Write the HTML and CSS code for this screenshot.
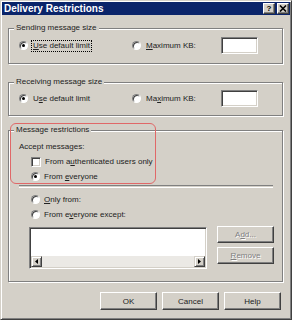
FILE: index.html
```html
<!DOCTYPE html>
<html lang="en">
<head>
  <meta charset="UTF-8">
  <title>Delivery Restrictions</title>
  <link rel="stylesheet" href="styles.css">
</head>
<body>
  <div class="window">
    <div class="titlebar">
      <span class="title">Delivery Restrictions</span>
      <div class="title-buttons">
        <span class="tbtn">?</span>
        <span class="tbtn">
          <svg width="8" height="7" viewBox="0 0 8 7"><path d="M1 0.5 L7 6.5 M7 0.5 L1 6.5" stroke="#000" stroke-width="1.6" fill="none"/></svg>
        </span>
      </div>
    </div>

    <div class="content">
      <fieldset class="group g1">
        <legend>Sending message size</legend>
        <div class="group-body">
          <div class="size-row">
            <label class="opt opt-default"><span class="radio checked"></span><span class="focus"><u>U</u>se default limit</span></label>
            <label class="opt"><span class="radio"></span><span class="opt-text"><u>M</u>aximum KB:</span></label>
            <span class="textbox"></span>
          </div>
        </div>
      </fieldset>

      <fieldset class="group g2">
        <legend>Receiving message size</legend>
        <div class="group-body">
          <div class="size-row">
            <label class="opt opt-default"><span class="radio checked"></span><span class="opt-text">U<u>s</u>e default limit</span></label>
            <label class="opt"><span class="radio"></span><span class="opt-text">Ma<u>x</u>imum KB:</span></label>
            <span class="textbox"></span>
          </div>
        </div>
      </fieldset>

      <fieldset class="group g3">
        <legend>Message restrictions</legend>
        <div class="group-body">
          <div class="line">Accept messages:</div>
          <label class="line sub"><span class="checkbox"></span><span class="opt-text">From a<u>u</u>thenticated users only</span></label>
          <label class="line sub"><span class="radio checked"></span><span class="opt-text">From <u>e</u>veryone</span></label>
          <div class="separator"></div>
          <label class="line sub"><span class="radio"></span><span class="opt-text"><u>O</u>nly from:</span></label>
          <label class="line sub"><span class="radio"></span><span class="opt-text">From e<u>v</u>eryone except:</span></label>
          <div class="list-row">
            <div class="listbox">
              <div class="list-area"></div>
              <div class="hscroll">
                <span class="sbtn"><svg width="3" height="5" viewBox="0 0 3 5"><path d="M3 0 L0 2.5 L3 5 Z" fill="#000"/></svg></span>
                <span class="track"></span>
                <span class="sbtn"><svg width="3" height="5" viewBox="0 0 3 5"><path d="M0 0 L3 2.5 L0 5 Z" fill="#000"/></svg></span>
              </div>
            </div>
            <div class="side-buttons">
              <span class="button disabled">A<u>d</u>d...</span>
              <span class="button disabled"><u>R</u>emove</span>
            </div>
          </div>
        </div>
      </fieldset>

      <div class="dialog-buttons">
        <span class="button">OK</span>
        <span class="button">Cancel</span>
        <span class="button">Help</span>
      </div>
    </div>

    <div class="annotation"></div>
  </div>
</body>
</html>
```

FILE: styles.css
```css
body {
  margin: 0;
  font-family: "Liberation Sans", Arial, sans-serif;
  font-size: 8px;
  color: #222;
}

.window {
  position: relative;
  width: 292px;
  height: 320px;
  box-sizing: border-box;
  background: #d4d0c8;
  border: 1px solid;
  border-color: #d4d0c8 #404040 #404040 #d4d0c8;
  box-shadow: inset 1px 1px #fff, inset -1px -1px #808080;
  padding: 1px;
}

.titlebar {
  height: 13px;
  background: #0a246a;
  display: flex;
  align-items: center;
  justify-content: space-between;
  padding: 0 1px 0 2px;
}

.title {
  color: #fff;
  font-weight: bold;
  font-size: 10px;
}

.title-buttons {
  display: flex;
  gap: 2px;
}

.tbtn {
  width: 12px;
  height: 11px;
  box-sizing: border-box;
  background: #d4d0c8;
  border: 1px solid;
  border-color: #fff #404040 #404040 #fff;
  box-shadow: inset -1px -1px #808080;
  display: flex;
  align-items: center;
  justify-content: center;
  font-weight: bold;
  font-size: 8px;
  line-height: 1;
  color: #000;
}

.content {
  padding: 8px 7px 0 6px;
  display: flex;
  flex-direction: column;
}

.group {
  margin: 0;
  padding: 0;
  min-width: 0;
  border: 1px solid #808080;
  box-shadow: inset 1px 1px #fff, 1px 1px #fff;
}

.group legend {
  margin-left: 5px;
  padding: 0 2px;
  line-height: 10px;
  background: #d4d0c8;
}

.g2 { margin-top: 13px; }
.g3 { margin-top: 9px; }

.g1 .group-body { padding: 4px 24px 9px 10px; }
.g2 .group-body { padding: 3px 24px 8px 10px; }
.g3 .group-body { padding: 4px 6px 12px 10px; }

.size-row {
  display: flex;
  align-items: center;
  height: 17px;
}

.opt {
  display: flex;
  align-items: center;
  gap: 5px;
}

.opt-default {
  width: 113px;
}

.focus {
  border: 1px dotted #000;
  padding: 0 1px;
  margin-left: -2px;
  line-height: 10px;
}

.radio {
  width: 9px;
  height: 9px;
  box-sizing: border-box;
  border-radius: 50%;
  background: #fff;
  border: 1px solid;
  border-color: #808080 #fff #fff #808080;
  box-shadow: inset 1px 1px #404040;
  display: flex;
  align-items: center;
  justify-content: center;
}

.radio.checked::after {
  content: "";
  width: 3px;
  height: 3px;
  border-radius: 50%;
  background: #000;
}

.checkbox {
  width: 10px;
  height: 10px;
  box-sizing: border-box;
  background: #fff;
  border: 1px solid;
  border-color: #808080 #fff #fff #808080;
  box-shadow: inset 1px 1px #404040, inset -1px -1px #d4d0c8;
}

.textbox {
  margin-left: auto;
  width: 37px;
  height: 17px;
  box-sizing: border-box;
  background: #fff;
  border: 1px solid;
  border-color: #808080 #fff #fff #808080;
  box-shadow: inset 1px 1px #404040, inset -1px -1px #d4d0c8;
}

.line {
  display: flex;
  align-items: center;
  gap: 4px;
  height: 15px;
}

.sub {
  margin-left: 12px;
}

.separator {
  margin: 1px 3px 4px 0;
  height: 1px;
  border-top: 1px solid #808080;
  border-bottom: 1px solid #fff;
}

.list-row {
  display: flex;
  align-items: flex-start;
  gap: 10px;
  margin-top: 4px;
}

.listbox {
  margin-left: 10px;
  margin-top: 1px;
  width: 178px;
  height: 42px;
  box-sizing: border-box;
  border: 1px solid;
  border-color: #808080 #fff #fff #808080;
  box-shadow: inset 1px 1px #404040, inset -1px -1px #d4d0c8;
  padding: 1px;
  display: flex;
  flex-direction: column;
}

.list-area {
  flex: 1;
  background: #fff;
}

.hscroll {
  display: flex;
  height: 11px;
}

.track {
  flex: 1;
  background: #ebe9e5;
}

.sbtn {
  width: 11px;
  box-sizing: border-box;
  background: #d4d0c8;
  border: 1px solid;
  border-color: #d4d0c8 #404040 #404040 #d4d0c8;
  box-shadow: inset 1px 1px #fff, inset -1px -1px #808080;
  display: flex;
  align-items: center;
  justify-content: center;
}

.side-buttons {
  display: flex;
  flex-direction: column;
  gap: 4px;
}

.button {
  width: 57px;
  height: 17px;
  box-sizing: border-box;
  background: #d4d0c8;
  border: 1px solid;
  border-color: #fff #404040 #404040 #fff;
  box-shadow: inset -1px -1px #808080;
  display: flex;
  align-items: center;
  justify-content: center;
}

.button.disabled {
  color: #808080;
  text-shadow: 1px 1px #fff;
}

.dialog-buttons {
  display: flex;
  justify-content: flex-end;
  gap: 5px;
  margin: 10px 2px 0 0;
}

.dialog-buttons .button {
  height: 18px;
}

.annotation {
  position: absolute;
  left: 9px;
  top: 122px;
  width: 146px;
  height: 61px;
  box-sizing: border-box;
  border: 1px solid #e06868;
  border-radius: 6px;
}
```
